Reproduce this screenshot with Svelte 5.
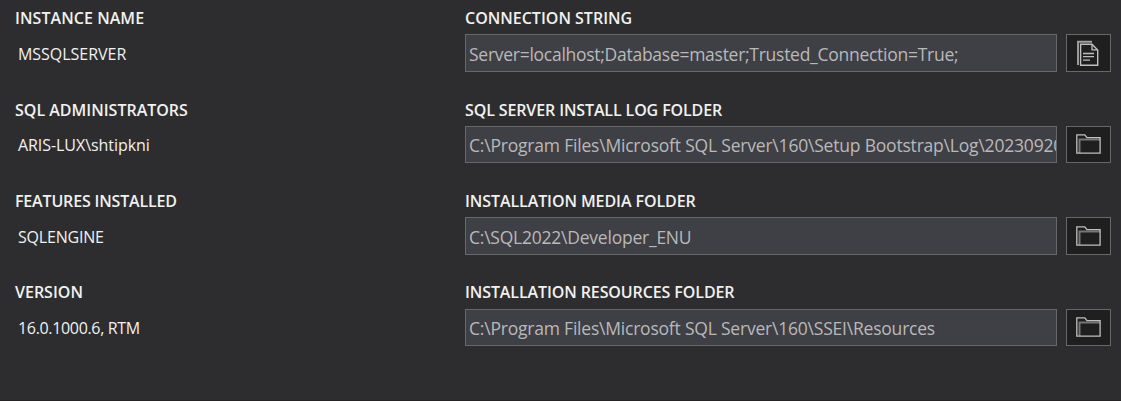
<script>
  const rows = [
    { label: 'INSTANCE NAME', value: 'MSSQLSERVER', field: 'CONNECTION STRING', text: 'Server=localhost;Database=master;Trusted_Connection=True;', icon: 'copy', ls: [0.06, -0.03, 0, -0.27] },
    { label: 'SQL ADMINISTRATORS', value: 'ARIS-LUX\\shtipkni', field: 'SQL SERVER INSTALL LOG FOLDER', text: 'C:\\Program Files\\Microsoft SQL Server\\160\\Setup Bootstrap\\Log\\20230920', icon: 'folder', ls: [0, -0.06, -0.12, -0.2] },
    { label: 'FEATURES INSTALLED', value: 'SQLENGINE', field: 'INSTALLATION MEDIA FOLDER', text: 'C:\\SQL2022\\Developer_ENU', icon: 'folder', ls: [-0.17, -0.2, -0.08, -0.23] },
    { label: 'VERSION', value: '16.0.1000.6, RTM', field: 'INSTALLATION RESOURCES FOLDER', text: 'C:\\Program Files\\Microsoft SQL Server\\160\\SSEI\\Resources', icon: 'folder', ls: [0, -0.33, -0.1, -0.21] }
  ];
</script>

<main>
  {#each rows as row}
    <section class="row">
      <div class="info">
        <h2><span style:letter-spacing="{row.ls[0]}px">{row.label}</span></h2>
        <p><span style:letter-spacing="{row.ls[1]}px">{row.value}</span></p>
      </div>
      <div class="detail">
        <h2><span style:letter-spacing="{row.ls[2]}px">{row.field}</span></h2>
        <div class="controls">
          <div class="box"><span style:letter-spacing="{row.ls[3]}px">{row.text}</span></div>
          <button aria-label={row.icon === 'copy' ? 'Copy' : 'Open folder'}>
            {#if row.icon === 'copy'}
              <svg width="43" height="36" viewBox="1 1 43 36" fill="none">
                <path d="M12 31V7.7H26" stroke="#a0a0a0" stroke-width="1.9" />
                <path d="M14.6 10.2H26L31.7 16V31.2H14.6Z" stroke="#c0c0c0" stroke-width="1.4" />
                <path d="M26 10.2V15.8H31.7" stroke="#c0c0c0" stroke-width="1.3" />
                <path d="M17 19.5H28M17 22.7H28M17 26.2H24" stroke="#bdbdbd" stroke-width="1.3" />
              </svg>
            {:else}
              <svg width="43" height="36" viewBox="1 1 43 36" fill="none">
                <path d="M13.5 28V14.4H34" stroke="#777" stroke-width="2" />
                <path d="M10.8 28.2V9.8H18.8L21 12.6H34.1V28.2Z" stroke="#c0c0c0" stroke-width="1.3" />
              </svg>
            {/if}
          </button>
        </div>
      </div>
    </section>
  {/each}
</main>

<style>
  :global(body) { background: #2d2d30; }
  main {
    box-sizing: border-box;
    height: 401px;
    overflow: hidden;
    display: grid;
    grid-template-rows: 92px 91px 92px 92px;
    align-content: start;
    background: #2d2d2f;
    border-bottom: 1px solid #252323;
    font-family: "Open Sans", "Noto Sans", sans-serif;
    color: #f1f1f1;
    white-space: nowrap;
  }
  .row { display: grid; grid-template-columns: 450px 1fr; padding: 0 10px 0 15px; }
  h2 { margin: 0; height: 34px; font-size: 16px; font-weight: 600; line-height: 36px; }
  .row:last-child h2 { line-height: 34px; }
  p { margin: 0; padding-left: 3px; font-size: 16px; line-height: 40px; }
  .row:nth-child(even) p { line-height: 38px; }
  .controls { display: grid; grid-template-columns: 592px 45px; column-gap: 9px; height: 38px; }
  .row:nth-child(even) .controls { height: 37px; }
  .box, button { box-sizing: border-box; border: 1px solid #686868; }
  .box { overflow: hidden; background: #3f3f46; color: #b9b9b9; padding-left: 3px; font-size: 17.5px; line-height: 38px; }
  .row:nth-child(even) .box { line-height: 37px; }
  button { display: flex; align-items: flex-start; padding: 0; background: #1f1f20; }
  .row:nth-child(even) svg { margin-top: -1px; }
</style>
